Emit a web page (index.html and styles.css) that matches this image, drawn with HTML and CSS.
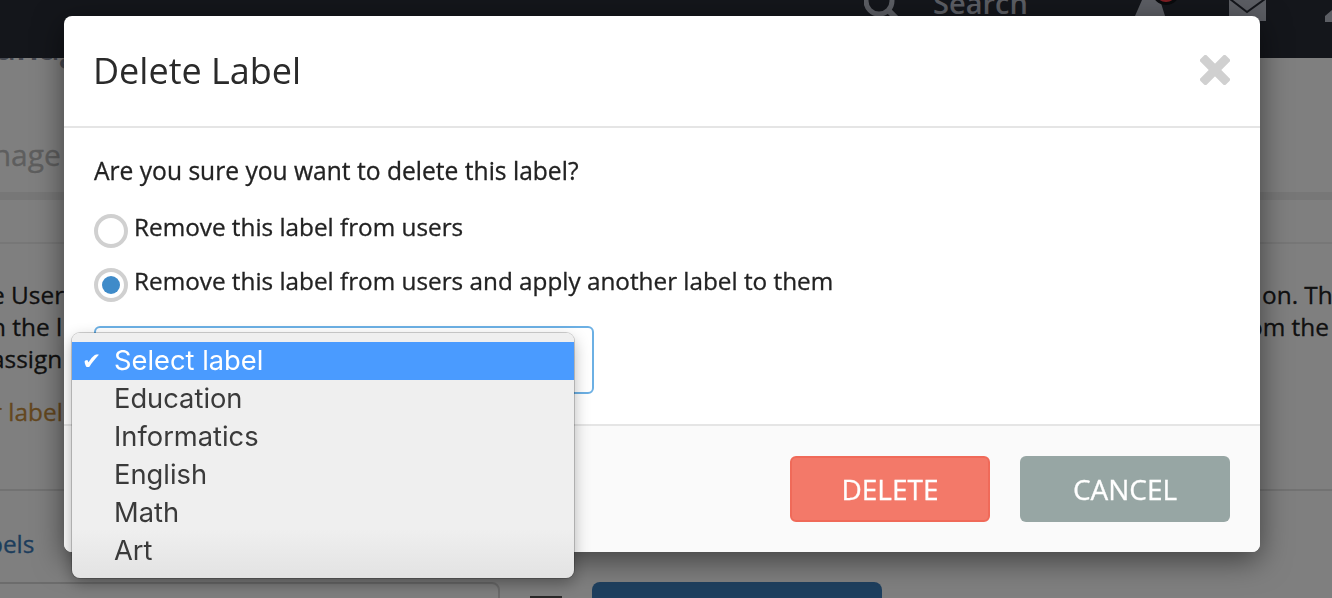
FILE: index.html
```html
<!DOCTYPE html>
<html lang="en">
<head>
    <meta charset="UTF-8">
    <meta name="viewport" content="width=device-width, initial-scale=1.0">
    <title>Delete Label</title>
    <link rel="stylesheet" href="styles.css">
</head>
<body>
    <div class="page">
        <div class="navbar">
            <svg class="nav-search" width="36" height="36" viewBox="0 0 36 36"><circle cx="15" cy="15" r="13" fill="none" stroke="currentColor" stroke-width="5"/><path d="M24 24l8 8" stroke="currentColor" stroke-width="6"/></svg>
            <span class="nav-search-text">Search</span>
            <svg class="nav-avatar" width="46" height="16" viewBox="0 0 46 16"><path d="M7 0L0 16h30L25 0z" fill="currentColor"/><circle cx="31" cy="-9" r="14" fill="#14161b"/><circle cx="31" cy="-9" r="11" fill="#ff3b45"/></svg>
            <svg class="nav-mail" width="37" height="21" viewBox="0 0 37 21"><path d="M0 0h37v21H0z" fill="currentColor"/><path d="M1 -1l17 13L36 -1" fill="none" stroke="#282c36" stroke-width="2"/></svg>
            <svg class="nav-more" width="12" height="12" viewBox="0 0 12 12"><path d="M0 6l7-6v12H0z" fill="currentColor"/></svg>
        </div>
        <div class="page-title">Manage</div>
        <div class="page-tab">Manage</div>
        <div class="tab-band"></div>
        <div class="notes">
            <div class="note-line"><span>e User</span><span class="note-right">on. The</span></div>
            <div class="note-line"><span>n the l</span><span class="note-right note-wide">om the</span></div>
            <div class="note-line"><span>assign</span></div>
            <div class="note-link">r label</div>
        </div>
        <div class="rule-row"><a class="labels-link">bels</a></div>
        <div class="tools">
            <div class="tools-input"></div>
            <div class="tools-icon"></div>
            <div class="tools-button"></div>
        </div>
    </div>

    <div class="overlay"></div>

    <div class="modal">
        <div class="modal-header">
            <h1>Delete Label</h1>
            <svg class="close-icon" width="30" height="30" viewBox="0 0 30 30"><rect x="-3" y="10.5" width="36" height="9" rx="2" transform="rotate(45 15 15)"/><rect x="-3" y="10.5" width="36" height="9" rx="2" transform="rotate(-45 15 15)"/></svg>
        </div>
        <div class="modal-body">
            <p class="question">Are you sure you want to delete this label?</p>
            <div class="radio-row"><span class="radio"></span><span>Remove this label from users</span></div>
            <div class="radio-row"><span class="radio checked"></span><span>Remove this label from users and apply another label to them</span></div>
            <div class="fake-select"></div>
        </div>
        <div class="modal-footer">
            <button class="btn btn-delete">DELETE</button>
            <button class="btn btn-cancel">CANCEL</button>
        </div>
    </div>

    <ul class="select-menu">
        <li class="selected"><span class="check">✔</span>Select label</li>
        <li>Education</li>
        <li>Informatics</li>
        <li>English</li>
        <li>Math</li>
        <li>Art</li>
    </ul>
</body>
</html>
```

FILE: styles.css
```css
html, body {
    margin: 0;
    padding: 0;
    height: 598px;
    overflow: hidden;
}
body {
    font-family: 'Open Sans', sans-serif;
    background-color: #fff;
    color: #222;
}
.page {
    height: 598px;
    overflow: hidden;
}
.navbar {
    height: 58px;
    background-color: #282c36;
    color: #b8bcc8;
    display: flex;
    align-items: flex-start;
    overflow: hidden;
    padding-left: 864px;
    position: relative;
    z-index: 1;
}
.navbar > * {
    flex: none;
}
.nav-search {
    margin-top: -14px;
}
.nav-search-text {
    margin: -17px 0 0 33px;
    font-size: 29px;
    font-weight: 600;
    line-height: 40px;
}
.nav-avatar {
    margin-left: 107px;
    overflow: visible;
}
.nav-mail {
    margin-left: 48px;
    overflow: visible;
}
.nav-more {
    margin: 10px 0 0 59px;
}
.page-title {
    margin: -36px 0 0 -38px;
    font-size: 36px;
    line-height: 50px;
    color: #8a90a0;
    font-weight: 600;
}
.page-tab {
    margin: 63px 0 0 -51px;
    font-size: 30px;
    line-height: 40px;
    color: #bcbcbc;
    -webkit-text-stroke: 0.3px #bcbcbc;
}
.tab-band {
    height: 42px;
    margin-top: 17px;
    background-color: #fff;
    border-top: 8px solid #eee;
    border-bottom: 2px solid #eee;
}
.notes {
    padding-top: 35px;
    height: 245px;
    font-size: 24.4px;
    box-sizing: border-box;
    -webkit-text-stroke: 0.3px;
}
.note-line {
    display: flex;
    justify-content: space-between;
    line-height: 32px;
    height: 32px;
    margin: 0 -12px 0 -9px;
    color: #222;
}
.note-right {
    width: 82px;
    white-space: nowrap;
}
.note-wide {
    width: 96px;
}
.note-link {
    margin: 20px 0 0 -8px;
    line-height: 33px;
    color: #c88f3e;
}
.rule-row {
    height: 93px;
    border-top: 2px solid #e4e4e4;
    box-sizing: border-box;
    padding-top: 36px;
}
.labels-link {
    display: block;
    margin-left: -12px;
    font-size: 24.4px;
    -webkit-text-stroke: 0.3px;
    line-height: 33px;
    color: #3a7ab8;
}
.tools {
    display: flex;
    align-items: flex-start;
    margin-left: -20px;
}
.tools-input {
    width: 516px;
    height: 40px;
    border: 2px solid #d8d8d8;
    border-radius: 8px;
}
.tools-icon {
    width: 32px;
    height: 20px;
    margin: 14px 0 0 30px;
    background-color: #555;
}
.tools-button {
    width: 290px;
    height: 40px;
    margin-left: 30px;
    border-radius: 8px;
    background-color: #3c7ebc;
}
.overlay {
    position: fixed;
    inset: 0;
    z-index: 2;
    background-color: rgba(0, 0, 0, 0.5);
}
.modal {
    position: absolute;
    z-index: 3;
    left: 64px;
    top: 16px;
    width: 1196px;
    height: 536px;
    display: flex;
    flex-direction: column;
    background-color: #fff;
    border-radius: 8px;
    box-shadow: 0 8px 30px rgba(0, 0, 0, 0.5);
    overflow: hidden;
}
.modal-header {
    height: 112px;
    flex: none;
    box-sizing: border-box;
    border-bottom: 2px solid #e5e5e5;
    display: flex;
    justify-content: space-between;
    align-items: flex-start;
    padding: 30px 30px 0 29px;
}
.modal-header h1 {
    margin: 0;
    font-size: 36px;
    font-weight: 400;
    line-height: 50px;
    color: #2a2a2a;
}
.close-icon {
    margin-top: 9px;
    fill: #d0d0d0;
}
.modal-body {
    flex: 1;
    box-sizing: border-box;
    padding: 26px 30px 0 30px;
    font-size: 24.3px;
    color: #222;
    -webkit-text-stroke: 0.3px;
}
.question {
    margin: 0 0 24px;
    font-size: 24.6px;
    line-height: 33px;
}
.radio-row {
    display: flex;
    align-items: flex-start;
    gap: 6px;
    height: 54px;
    line-height: 31px;
}
.radio {
    width: 34px;
    height: 34px;
    margin-top: 3px;
    box-sizing: border-box;
    border: 4px solid #d0d0d0;
    border-radius: 50%;
    display: flex;
    align-items: center;
    justify-content: center;
}
.radio.checked::after {
    content: "";
    width: 18px;
    height: 18px;
    border-radius: 50%;
    background-color: #3f8bc9;
}
.fake-select {
    width: 500px;
    height: 68px;
    margin-top: 7px;
    box-sizing: border-box;
    border: 2px solid #6cb0e4;
    border-radius: 6px;
}
.modal-footer {
    height: 128px;
    flex: none;
    box-sizing: border-box;
    border-top: 2px solid #e5e5e5;
    background-color: #fafafa;
    display: flex;
    justify-content: flex-end;
    align-items: flex-start;
    gap: 30px;
    padding: 30px 30px 0;
}
.btn {
    height: 66px;
    border-radius: 6px;
    font-family: 'Open Sans', sans-serif;
    font-size: 28px;
    color: #fff;
    padding: 0;
    -webkit-text-stroke: 0.3px;
}
.btn-delete {
    width: 200px;
    background-color: #f37969;
    border: 2px solid #f06a59;
}
.btn-cancel {
    width: 210px;
    background-color: #97a6a4;
    border: none;
}
.select-menu {
    position: absolute;
    z-index: 4;
    left: 72px;
    top: 333px;
    width: 502px;
    height: 245px;
    margin: 0;
    padding: 9px 0 0;
    box-sizing: border-box;
    list-style: none;
    border-radius: 8px;
    background: linear-gradient(#efefef 80%, #e3e3e3);
    box-shadow: 0 0 0 1px rgba(0, 0, 0, 0.18), 0 6px 16px rgba(0, 0, 0, 0.3);
    font-family: Inter, sans-serif;
    font-size: 27.3px;
    color: #3a3a3a;
}
.select-menu li {
    height: 38px;
    line-height: 38px;
    padding-left: 42px;
    position: relative;
}
.select-menu li.selected {
    background-color: #4a9bff;
    color: #fff;
}
.check {
    position: absolute;
    left: 10px;
    font-size: 23px;
    font-family: 'DejaVu Sans', sans-serif;
}
```
